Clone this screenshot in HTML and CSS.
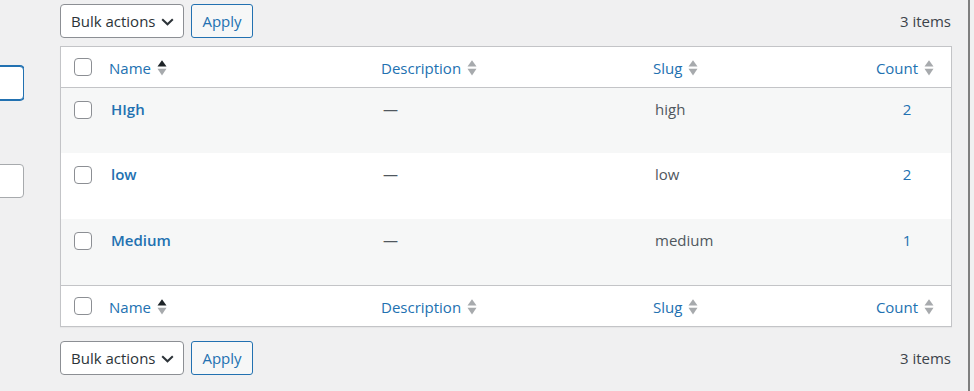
FILE: index.html
```html
<!DOCTYPE html>
<html lang="en">
<head>
<meta charset="utf-8">
<title>Tags</title>
<link rel="stylesheet" href="styles.css">
</head>
<body>
<div class="page">
  <div class="side">
    <div class="field focused"></div>
    <div class="field"></div>
  </div>
  <div class="main">
    <div class="tablenav top">
      <div class="select">Bulk actions
        <svg class="chev" width="13" height="8" viewBox="0 0 13 8"><path d="M1.2 1.2 L6.5 6.3 L11.8 1.2" fill="none" stroke="#2c3338" stroke-width="2"/></svg>
      </div>
      <button class="apply">Apply</button>
      <span class="count-items">3 items</span>
    </div>
    <div class="table-wrap">
      <table class="list">
        <colgroup>
          <col class="c-check"><col class="c-name"><col class="c-desc"><col class="c-slug"><col class="c-count">
        </colgroup>
        <thead>
          <tr>
            <td class="check"><span class="box"></span></td>
            <th class="sortable"><span class="lbl">Name</span><svg class="sort" width="10" height="18" viewBox="0 0 10 18"><path d="M5 1.2 L9.5 7.6 L0.5 7.6Z" fill="#1d2327"/><path d="M0.5 9.8 L9.5 9.8 L5 16.4Z" fill="#a7aaad"/></svg></th>
            <th class="sortable"><span class="lbl">Description</span><svg class="sort" width="10" height="18" viewBox="0 0 10 18"><path d="M5 1.2 L9.5 7.6 L0.5 7.6Z" fill="#a7aaad"/><path d="M0.5 9.8 L9.5 9.8 L5 16.4Z" fill="#a7aaad"/></svg></th>
            <th class="sortable"><span class="lbl">Slug</span><svg class="sort" width="10" height="18" viewBox="0 0 10 18"><path d="M5 1.2 L9.5 7.6 L0.5 7.6Z" fill="#a7aaad"/><path d="M0.5 9.8 L9.5 9.8 L5 16.4Z" fill="#a7aaad"/></svg></th>
            <th class="sortable num"><span class="lbl">Count</span><svg class="sort" width="10" height="18" viewBox="0 0 10 18"><path d="M5 1.2 L9.5 7.6 L0.5 7.6Z" fill="#a7aaad"/><path d="M0.5 9.8 L9.5 9.8 L5 16.4Z" fill="#a7aaad"/></svg></th>
          </tr>
        </thead>
        <tbody>
          <tr class="alt">
            <td class="check"><span class="box"></span></td>
            <td><a class="title">HIgh</a></td>
            <td class="muted">—</td>
            <td class="muted">high</td>
            <td class="num"><a class="link">2</a></td>
          </tr>
          <tr>
            <td class="check"><span class="box"></span></td>
            <td><a class="title">low</a></td>
            <td class="muted">—</td>
            <td class="muted">low</td>
            <td class="num"><a class="link">2</a></td>
          </tr>
          <tr class="alt">
            <td class="check"><span class="box"></span></td>
            <td><a class="title">Medium</a></td>
            <td class="muted">—</td>
            <td class="muted">medium</td>
            <td class="num"><a class="link">1</a></td>
          </tr>
        </tbody>
        <tfoot>
          <tr>
            <td class="check"><span class="box"></span></td>
            <th class="sortable"><span class="lbl">Name</span><svg class="sort" width="10" height="18" viewBox="0 0 10 18"><path d="M5 1.2 L9.5 7.6 L0.5 7.6Z" fill="#1d2327"/><path d="M0.5 9.8 L9.5 9.8 L5 16.4Z" fill="#a7aaad"/></svg></th>
            <th class="sortable"><span class="lbl">Description</span><svg class="sort" width="10" height="18" viewBox="0 0 10 18"><path d="M5 1.2 L9.5 7.6 L0.5 7.6Z" fill="#a7aaad"/><path d="M0.5 9.8 L9.5 9.8 L5 16.4Z" fill="#a7aaad"/></svg></th>
            <th class="sortable"><span class="lbl">Slug</span><svg class="sort" width="10" height="18" viewBox="0 0 10 18"><path d="M5 1.2 L9.5 7.6 L0.5 7.6Z" fill="#a7aaad"/><path d="M0.5 9.8 L9.5 9.8 L5 16.4Z" fill="#a7aaad"/></svg></th>
            <th class="sortable num"><span class="lbl">Count</span><svg class="sort" width="10" height="18" viewBox="0 0 10 18"><path d="M5 1.2 L9.5 7.6 L0.5 7.6Z" fill="#a7aaad"/><path d="M0.5 9.8 L9.5 9.8 L5 16.4Z" fill="#a7aaad"/></svg></th>
          </tr>
        </tfoot>
      </table>
    </div>
    <div class="tablenav bottom">
      <div class="select">Bulk actions
        <svg class="chev" width="13" height="8" viewBox="0 0 13 8"><path d="M1.2 1.2 L6.5 6.3 L11.8 1.2" fill="none" stroke="#2c3338" stroke-width="2"/></svg>
      </div>
      <button class="apply">Apply</button>
      <span class="count-items">3 items</span>
    </div>
  </div>
  <div class="divider"></div>
</div>
</body>
</html>
```

FILE: styles.css
```css
html, body {
  margin: 0;
  padding: 0;
  background: #f0f0f1;
}
body {
  font-family: "Open Sans", "Noto Sans", sans-serif;
  font-size: 15px;
  color: #3c434a;
}
.page {
  display: flex;
  height: 391px;
  overflow: hidden;
}
.side {
  width: 24px;
  flex: none;
  overflow: hidden;
  display: flex;
  flex-direction: column;
  align-items: flex-end;
}
.field {
  flex: none;
  width: 200px;
  height: 34px;
  box-sizing: border-box;
  background: #fff;
  border: 1px solid #a7aaad;
  border-radius: 4px;
  margin-top: 64px;
}
.field.focused {
  border-color: #2271b1;
  box-shadow: 0 0 0 1px #2271b1;
  height: 34px;
  margin-top: 66px;
}
.main {
  width: 892px;
  flex: none;
  margin-left: 36px;
}
.divider {
  width: 2px;
  flex: none;
  margin-left: 16px;
  background: #7f7f7f;
}
.tablenav {
  display: flex;
  align-items: center;
  gap: 7px;
  height: 34px;
}
.tablenav.top {
  margin-top: 4px;
}
.tablenav.bottom {
  margin-top: 14px;
}
.select {
  box-sizing: border-box;
  width: 124px;
  height: 34px;
  border: 1px solid #8c8f94;
  border-radius: 4px;
  background: #fff;
  color: #2c3338;
  display: flex;
  align-items: center;
  justify-content: space-between;
  padding: 0 9px 0 10px;
  line-height: 1;
}
.chev {
  display: block;
  margin-top: 1px;
}
.apply {
  box-sizing: border-box;
  height: 34px;
  width: 62px;
  border: 1px solid #2271b1;
  border-radius: 3px;
  background: #f6f7f7;
  color: #2271b1;
  font-family: inherit;
  font-size: 15px;
  padding: 0;
}
.count-items {
  margin-left: auto;
  margin-right: 1px;
  color: #3c434a;
}
.table-wrap {
  margin-top: 8px;
  border: 1px solid #c3c4c7;
  background: #fff;
  box-shadow: 0 1px 1px rgba(0,0,0,0.04);
}
.list {
  width: 100%;
  table-layout: fixed;
  border-collapse: collapse;
  border-spacing: 0;
}
.c-check { width: 38px; }
.c-name { width: 272px; }
.c-desc { width: 272px; }
.c-slug { width: 220px; }
.c-count { width: 88px; }
thead tr {
  height: 40px;
  border-bottom: 1px solid #c3c4c7;
}
tfoot tr {
  height: 41px;
  border-top: 1px solid #c3c4c7;
}
th {
  font-weight: 400;
  text-align: left;
  padding: 0 10px;
  vertical-align: middle;
  color: #2271b1;
  white-space: nowrap;
}
th .lbl {
  vertical-align: middle;
}
.sort {
  vertical-align: middle;
  margin-left: 6px;
}
th.num, td.num {
  text-align: center;
}
th.num {
  padding: 0 12px 0 8px;
}
td.check {
  padding: 0 0 0 13px;
  vertical-align: middle;
}
.box {
  display: block;
  width: 18px;
  height: 18px;
  box-sizing: border-box;
  border: 1px solid #8c8f94;
  border-radius: 4px;
  background: #fff;
}
tbody tr {
  height: 66px;
}
tbody tr.alt {
  background: #f6f7f7;
}
tbody td {
  vertical-align: top;
  padding: 11px 10px 12px 12px;
  line-height: 20px;
}
tbody td.check {
  vertical-align: top;
  padding: 13px 0 0 13px;
}
tbody td.num {
  padding-left: 10px;
}
.title {
  color: #2271b1;
  font-weight: 600;
}
.link {
  color: #2271b1;
}
.muted {
  color: #50575e;
}
```
